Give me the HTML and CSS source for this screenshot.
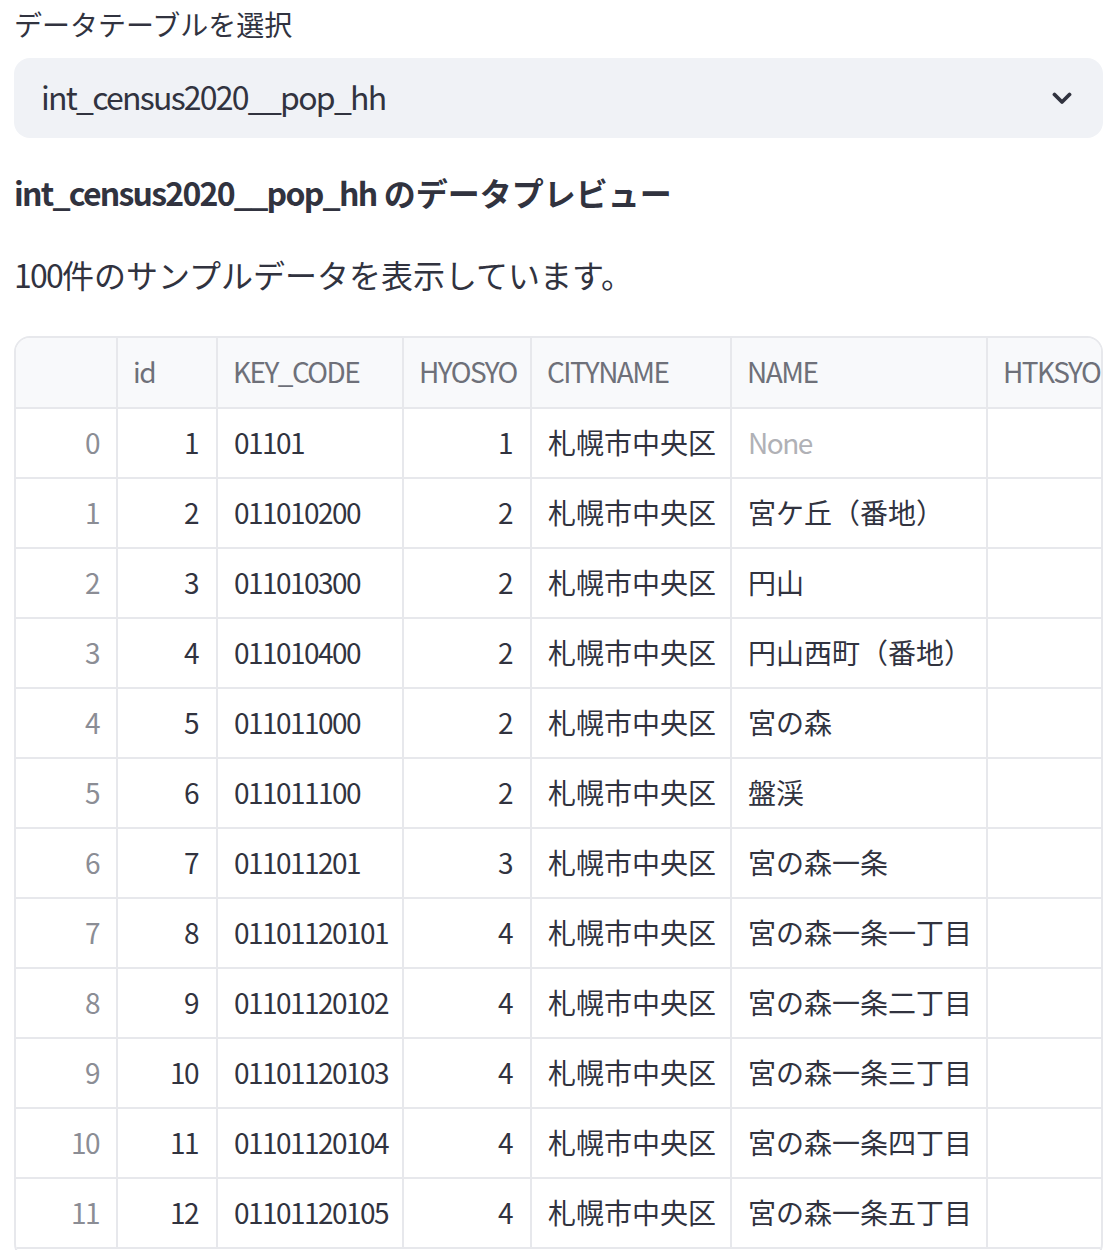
FILE: index.html
```html
<!DOCTYPE html>
<html lang="ja">
<head>
<meta charset="utf-8">
<title>データプレビュー</title>
<link rel="stylesheet" href="styles.css">
</head>
<body>
<main class="page">
  <div class="label">データテーブルを選択</div>
  <div class="select">
    <span class="select-value lat">int_census2020__pop_hh</span>
    <svg class="chevron" width="20" height="13" viewBox="0 0 20 13" aria-hidden="true">
      <path d="M2.5 2.5 L10 10 L17.5 2.5" fill="none" stroke="#31333f" stroke-width="3.8" stroke-linecap="round" stroke-linejoin="round"/>
    </svg>
  </div>
  <h3 class="heading"><span class="lat">int_census2020__pop_hh</span> のデータプレビュー</h3>
  <p class="para"><span class="lat">100</span>件のサンプルデータを表示しています。</p>

  <div class="grid-wrap">
    <div class="row head">
      <div class="cell"></div>
      <div class="cell">id</div>
      <div class="cell">KEY_CODE</div>
      <div class="cell">HYOSYO</div>
      <div class="cell">CITYNAME</div>
      <div class="cell">NAME</div>
      <div class="cell">HTKSYORI</div>
    </div>
    <div class="row"><div class="cell idx">0</div><div class="cell num">1</div><div class="cell">01101</div><div class="cell num">1</div><div class="cell jp">札幌市中央区</div><div class="cell none">None</div><div class="cell"></div></div>
    <div class="row"><div class="cell idx">1</div><div class="cell num">2</div><div class="cell">011010200</div><div class="cell num">2</div><div class="cell jp">札幌市中央区</div><div class="cell jp">宮ケ丘（番地）</div><div class="cell"></div></div>
    <div class="row"><div class="cell idx">2</div><div class="cell num">3</div><div class="cell">011010300</div><div class="cell num">2</div><div class="cell jp">札幌市中央区</div><div class="cell jp">円山</div><div class="cell"></div></div>
    <div class="row"><div class="cell idx">3</div><div class="cell num">4</div><div class="cell">011010400</div><div class="cell num">2</div><div class="cell jp">札幌市中央区</div><div class="cell jp">円山西町（番地）</div><div class="cell"></div></div>
    <div class="row"><div class="cell idx">4</div><div class="cell num">5</div><div class="cell">011011000</div><div class="cell num">2</div><div class="cell jp">札幌市中央区</div><div class="cell jp">宮の森</div><div class="cell"></div></div>
    <div class="row"><div class="cell idx">5</div><div class="cell num">6</div><div class="cell">011011100</div><div class="cell num">2</div><div class="cell jp">札幌市中央区</div><div class="cell jp">盤渓</div><div class="cell"></div></div>
    <div class="row"><div class="cell idx">6</div><div class="cell num">7</div><div class="cell">011011201</div><div class="cell num">3</div><div class="cell jp">札幌市中央区</div><div class="cell jp">宮の森一条</div><div class="cell"></div></div>
    <div class="row"><div class="cell idx">7</div><div class="cell num">8</div><div class="cell">01101120101</div><div class="cell num">4</div><div class="cell jp">札幌市中央区</div><div class="cell jp">宮の森一条一丁目</div><div class="cell"></div></div>
    <div class="row"><div class="cell idx">8</div><div class="cell num">9</div><div class="cell">01101120102</div><div class="cell num">4</div><div class="cell jp">札幌市中央区</div><div class="cell jp">宮の森一条二丁目</div><div class="cell"></div></div>
    <div class="row"><div class="cell idx">9</div><div class="cell num">10</div><div class="cell">01101120103</div><div class="cell num">4</div><div class="cell jp">札幌市中央区</div><div class="cell jp">宮の森一条三丁目</div><div class="cell"></div></div>
    <div class="row"><div class="cell idx">10</div><div class="cell num">11</div><div class="cell">01101120104</div><div class="cell num">4</div><div class="cell jp">札幌市中央区</div><div class="cell jp">宮の森一条四丁目</div><div class="cell"></div></div>
    <div class="row"><div class="cell idx">11</div><div class="cell num">12</div><div class="cell">01101120105</div><div class="cell num">4</div><div class="cell jp">札幌市中央区</div><div class="cell jp">宮の森一条五丁目</div><div class="cell"></div></div>
  </div>
</main>
</body>
</html>
```

FILE: styles.css
```css
html, body {
  margin: 0;
  padding: 0;
  background: #ffffff;
}

body {
  font-family: "Noto Sans CJK JP", "Noto Sans", sans-serif;
  color: #31333f;
}

.page {
  width: 1089px;
  margin-left: 14px;
  padding: 0;
}

.lat {
  letter-spacing: -0.055em;
}

.label {
  font-size: 28px;
  line-height: 48px;
  height: 48px;
  color: #31333f;
}

.select {
  margin-top: 10px;
  height: 80px;
  box-sizing: border-box;
  background: #f0f2f6;
  border-radius: 16px;
  display: flex;
  align-items: center;
  justify-content: space-between;
  padding: 0 31px 0 27px;
}

.select-value {
  font-size: 32px;
  line-height: 40px;
  padding-bottom: 4px;
}

.chevron {
  display: block;
}

.heading {
  margin: 30px 0 0 0;
  font-size: 32px;
  line-height: 48px;
  font-weight: 700;
}

.para {
  margin: 34px 0 0 0;
  font-size: 32px;
  line-height: 48px;
}

.grid-wrap {
  margin-top: 38px;
  border: 2px solid #e7e8ec;
  border-radius: 16px;
  overflow: hidden;
  height: 920px;
}

.row {
  display: grid;
  grid-template-columns: 102px 100px 186px 128px 200px 256px 220px;
  height: 70px;
}

.row.head {
  height: 71px;
}

.cell {
  box-sizing: border-box;
  border-right: 2px solid #e7e8ec;
  border-bottom: 2px solid #e7e8ec;
  padding: 0 16px 2px 16px;
  font-size: 28px;
  line-height: 66px;
  white-space: nowrap;
  overflow: hidden;
  letter-spacing: -0.055em;
}

.cell.jp {
  letter-spacing: 0;
}

.head .cell {
  background: #f8f9fb;
  color: #6e7079;
  padding-left: 15px;
  line-height: 67px;
}

.num {
  text-align: right;
  padding-right: 18px;
}

.idx {
  text-align: right;
  padding-right: 17px;
  color: #8b8d95;
}

.none {
  color: #b0b1b6;
}
```
